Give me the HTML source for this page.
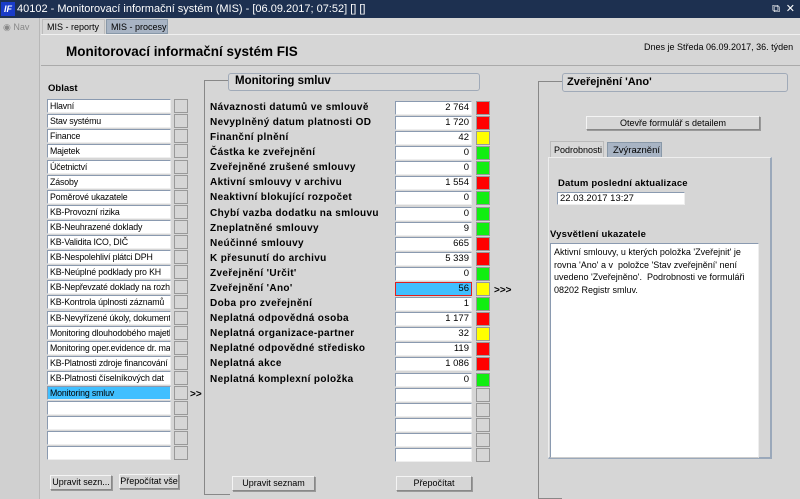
<!DOCTYPE html>
<html><head><meta charset="utf-8"><style>
*{box-sizing:border-box;margin:0;padding:0}
body{width:800px;height:499px;overflow:hidden;background:#d6d6d6;font-family:"Liberation Sans",Arial,sans-serif;font-size:9.5px;color:#000;position:relative}
.a{position:absolute}
.tb{left:0;top:0;width:800px;height:18px;background:#1d3050;color:#fff;font-size:11px;line-height:18px;padding-left:17px}
.inp{position:absolute;background:#fff;border:1px solid #8a9ab0;border-right-color:#eee;border-bottom-color:#eee;height:14px;line-height:12px;padding:0 2px;white-space:nowrap;overflow:hidden;font-size:9.5px}
.l .inp{font-size:8.8px;letter-spacing:-0.15px}
.sq{position:absolute;width:14px;height:14px;border:1px solid #999;background:#d6d6d6}
.btn{position:absolute;border:1px solid #888;border-left-color:#f4f4f4;border-top-color:#f4f4f4;background:#d6d6d6;text-align:center;font-size:9px;line-height:13px;box-shadow:1px 1px 0 #999;white-space:nowrap;overflow:hidden}
.lbl{position:absolute;font-weight:bold;font-size:10px;letter-spacing:0.35px;white-space:nowrap}
.r{background:#f00}.y{background:#ff0}.g{background:#1e1}
</style></head><body>
<div class="a tb"><span class="a" style="left:1px;top:2px;width:14px;height:14px;background:#1a3cc8;color:#fff;font-size:9px;line-height:14px;font-weight:bold;font-style:italic;text-align:center">IF</span>40102 - Monitorovací informační systém (MIS) - [06.09.2017; 07:52] [] []<span class="a" style="right:20px;top:0">⧉</span><span class="a" style="right:5px;top:0">✕</span></div>
<div class="a" style="left:0;top:18px;width:40px;height:481px;background:#d0d0d0;border-right:1px solid #b8b8b8"></div>
<div class="a" style="left:3px;top:22px;color:#888;font-size:9px">◉ Nav</div>
<div class="a" style="left:42px;top:19px;width:63px;height:16px;background:#d6d6d6;border:1px solid #bbb;border-bottom:none;font-size:9px;line-height:14px;padding-left:4px">MIS - reporty</div>
<div class="a" style="left:106px;top:19px;width:62px;height:15px;background:#a8b4c4;border:1px solid #8898a8;font-size:9px;line-height:14px;padding-left:4px">MIS - procesy</div>
<div class="a" style="left:41px;top:34px;width:759px;height:1px;background:#f0f0f0"></div>
<div class="a" style="left:66px;top:44px;font-size:13.5px;font-weight:bold">Monitorovací informační systém FIS</div>
<div class="a" style="left:644px;top:42px;font-size:9px">Dnes je Středa  06.09.2017, 36. týden</div>
<div class="a" style="left:41px;top:65px;width:759px;height:1px;background:#f4f4f4;border-top:1px solid #aaa"></div>
<div class="lbl" style="left:48px;top:83px;font-size:9.5px;letter-spacing:0">Oblast</div>
<div class="l">
<div class="inp" style="left:47px;top:99px;width:124px">Hlavní</div><div class="sq" style="left:174px;top:99px"></div>
<div class="inp" style="left:47px;top:114px;width:124px">Stav systému</div><div class="sq" style="left:174px;top:114px"></div>
<div class="inp" style="left:47px;top:129px;width:124px">Finance</div><div class="sq" style="left:174px;top:129px"></div>
<div class="inp" style="left:47px;top:144px;width:124px">Majetek</div><div class="sq" style="left:174px;top:144px"></div>
<div class="inp" style="left:47px;top:160px;width:124px">Účetnictví</div><div class="sq" style="left:174px;top:160px"></div>
<div class="inp" style="left:47px;top:175px;width:124px">Zásoby</div><div class="sq" style="left:174px;top:175px"></div>
<div class="inp" style="left:47px;top:190px;width:124px">Poměrové ukazatele</div><div class="sq" style="left:174px;top:190px"></div>
<div class="inp" style="left:47px;top:205px;width:124px">KB-Provozní rizika</div><div class="sq" style="left:174px;top:205px"></div>
<div class="inp" style="left:47px;top:220px;width:124px">KB-Neuhrazené doklady</div><div class="sq" style="left:174px;top:220px"></div>
<div class="inp" style="left:47px;top:235px;width:124px">KB-Validita ICO, DIČ</div><div class="sq" style="left:174px;top:235px"></div>
<div class="inp" style="left:47px;top:250px;width:124px">KB-Nespolehliví plátci DPH</div><div class="sq" style="left:174px;top:250px"></div>
<div class="inp" style="left:47px;top:265px;width:124px">KB-Neúplné podklady pro KH</div><div class="sq" style="left:174px;top:265px"></div>
<div class="inp" style="left:47px;top:280px;width:124px">KB-Nepřevzaté doklady na rozh</div><div class="sq" style="left:174px;top:280px"></div>
<div class="inp" style="left:47px;top:295px;width:124px">KB-Kontrola úplnosti záznamů</div><div class="sq" style="left:174px;top:295px"></div>
<div class="inp" style="left:47px;top:311px;width:124px">KB-Nevyřízené úkoly, dokument</div><div class="sq" style="left:174px;top:311px"></div>
<div class="inp" style="left:47px;top:326px;width:124px">Monitoring dlouhodobého majetk</div><div class="sq" style="left:174px;top:326px"></div>
<div class="inp" style="left:47px;top:341px;width:124px">Monitoring oper.evidence dr. ma</div><div class="sq" style="left:174px;top:341px"></div>
<div class="inp" style="left:47px;top:356px;width:124px">KB-Platnosti zdroje financování</div><div class="sq" style="left:174px;top:356px"></div>
<div class="inp" style="left:47px;top:371px;width:124px">KB-Platnosti číselníkových dat</div><div class="sq" style="left:174px;top:371px"></div>
<div class="inp" style="left:47px;top:386px;width:124px;background:#40bfff">Monitoring smluv</div><div class="sq" style="left:174px;top:386px"></div>
<div class="inp" style="left:47px;top:401px;width:124px"></div><div class="sq" style="left:174px;top:401px"></div>
<div class="inp" style="left:47px;top:416px;width:124px"></div><div class="sq" style="left:174px;top:416px"></div>
<div class="inp" style="left:47px;top:431px;width:124px"></div><div class="sq" style="left:174px;top:431px"></div>
<div class="inp" style="left:47px;top:446px;width:124px"></div><div class="sq" style="left:174px;top:446px"></div>
</div>
<div class="lbl" style="left:190px;top:389px;letter-spacing:0">&gt;&gt;</div>
<div class="btn" style="left:50px;top:475px;width:62px;height:15px">Upravit sezn...</div>
<div class="btn" style="left:119px;top:474px;width:60px;height:15px">Přepočítat vše</div>

<div class="a" style="left:204px;top:80px;width:26px;height:415px;border-left:1px solid #888;border-top:1px solid #888;border-bottom:1px solid #888"></div>
<div class="a" style="left:228px;top:73px;width:252px;height:18px;border:1px solid #a0aab8;border-radius:3px;background:#d8d8d8;font-weight:bold;font-size:11.5px;line-height:15px;padding-left:6px">Monitoring smluv</div>

<div class="lbl" style="left:210px;top:102px">Návaznosti datumů ve smlouvě</div><div class="inp" style="left:395px;top:101px;width:77px;text-align:right">2 764</div><div class="sq r" style="left:476px;top:101px"></div>
<div class="lbl" style="left:210px;top:117px">Nevyplněný datum platnosti OD</div><div class="inp" style="left:395px;top:116px;width:77px;text-align:right">1 720</div><div class="sq r" style="left:476px;top:116px"></div>
<div class="lbl" style="left:210px;top:132px">Finanční plnění</div><div class="inp" style="left:395px;top:131px;width:77px;text-align:right">42</div><div class="sq y" style="left:476px;top:131px"></div>
<div class="lbl" style="left:210px;top:147px">Částka ke zveřejnění</div><div class="inp" style="left:395px;top:146px;width:77px;text-align:right">0</div><div class="sq g" style="left:476px;top:146px"></div>
<div class="lbl" style="left:210px;top:162px">Zveřejněné zrušené smlouvy</div><div class="inp" style="left:395px;top:161px;width:77px;text-align:right">0</div><div class="sq g" style="left:476px;top:161px"></div>
<div class="lbl" style="left:210px;top:177px">Aktivní smlouvy v archivu</div><div class="inp" style="left:395px;top:176px;width:77px;text-align:right">1 554</div><div class="sq r" style="left:476px;top:176px"></div>
<div class="lbl" style="left:210px;top:192px">Neaktivní blokující rozpočet</div><div class="inp" style="left:395px;top:191px;width:77px;text-align:right">0</div><div class="sq g" style="left:476px;top:191px"></div>
<div class="lbl" style="left:210px;top:208px">Chybí vazba dodatku na smlouvu</div><div class="inp" style="left:395px;top:207px;width:77px;text-align:right">0</div><div class="sq g" style="left:476px;top:207px"></div>
<div class="lbl" style="left:210px;top:223px">Zneplatněné smlouvy</div><div class="inp" style="left:395px;top:222px;width:77px;text-align:right">9</div><div class="sq g" style="left:476px;top:222px"></div>
<div class="lbl" style="left:210px;top:238px">Neúčinné smlouvy</div><div class="inp" style="left:395px;top:237px;width:77px;text-align:right">665</div><div class="sq r" style="left:476px;top:237px"></div>
<div class="lbl" style="left:210px;top:253px">K přesunutí do archivu</div><div class="inp" style="left:395px;top:252px;width:77px;text-align:right">5 339</div><div class="sq r" style="left:476px;top:252px"></div>
<div class="lbl" style="left:210px;top:268px">Zveřejnění 'Určit'</div><div class="inp" style="left:395px;top:267px;width:77px;text-align:right">0</div><div class="sq g" style="left:476px;top:267px"></div>
<div class="lbl" style="left:210px;top:283px">Zveřejnění 'Ano'</div><div class="inp" style="left:395px;top:282px;width:77px;text-align:right;background:#40bfff;border:1px solid #e02020">56</div><div class="sq y" style="left:476px;top:282px"></div>
<div class="lbl" style="left:210px;top:298px">Doba pro zveřejnění</div><div class="inp" style="left:395px;top:297px;width:77px;text-align:right">1</div><div class="sq g" style="left:476px;top:297px"></div>
<div class="lbl" style="left:210px;top:313px">Neplatná odpovědná osoba</div><div class="inp" style="left:395px;top:312px;width:77px;text-align:right">1 177</div><div class="sq r" style="left:476px;top:312px"></div>
<div class="lbl" style="left:210px;top:328px">Neplatná organizace-partner</div><div class="inp" style="left:395px;top:327px;width:77px;text-align:right">32</div><div class="sq y" style="left:476px;top:327px"></div>
<div class="lbl" style="left:210px;top:343px">Neplatné odpovědné středisko</div><div class="inp" style="left:395px;top:342px;width:77px;text-align:right">119</div><div class="sq r" style="left:476px;top:342px"></div>
<div class="lbl" style="left:210px;top:358px">Neplatná akce</div><div class="inp" style="left:395px;top:357px;width:77px;text-align:right">1 086</div><div class="sq r" style="left:476px;top:357px"></div>
<div class="lbl" style="left:210px;top:374px">Neplatná komplexní položka</div><div class="inp" style="left:395px;top:373px;width:77px;text-align:right">0</div><div class="sq g" style="left:476px;top:373px"></div>
<div class="inp" style="left:395px;top:388px;width:77px"></div><div class="sq" style="left:476px;top:388px"></div>
<div class="inp" style="left:395px;top:403px;width:77px"></div><div class="sq" style="left:476px;top:403px"></div>
<div class="inp" style="left:395px;top:418px;width:77px"></div><div class="sq" style="left:476px;top:418px"></div>
<div class="inp" style="left:395px;top:433px;width:77px"></div><div class="sq" style="left:476px;top:433px"></div>
<div class="inp" style="left:395px;top:448px;width:77px"></div><div class="sq" style="left:476px;top:448px"></div>
<div class="lbl" style="left:494px;top:285px;letter-spacing:0">&gt;&gt;&gt;</div>
<div class="btn" style="left:232px;top:476px;width:83px;height:15px">Upravit seznam</div>
<div class="btn" style="left:396px;top:476px;width:76px;height:15px">Přepočítat</div>

<div class="a" style="left:538px;top:81px;width:24px;height:418px;border-left:1px solid #888;border-top:1px solid #888;border-bottom:1px solid #888"></div>
<div class="a" style="left:562px;top:73px;width:226px;height:19px;border:1px solid #a0aab8;border-radius:3px;background:#d8d8d8;font-weight:bold;font-size:11px;line-height:16px;padding-left:4px">Zveřejnění 'Ano'</div>
<div class="btn" style="left:586px;top:116px;width:174px;height:14px;line-height:12px">Otevře formulář s detailem</div>
<div class="a" style="left:550px;top:141px;width:54px;height:17px;border:1px solid #bbb;border-bottom:none;background:#d8d8d8;font-size:9px;line-height:16px;padding-left:3px;white-space:nowrap">Podrobnosti</div>
<div class="a" style="left:607px;top:142px;width:55px;height:16px;background:#a8b4c4;border:1px solid #8898a8;font-size:9.5px;line-height:15px;padding-left:5px">Zvýraznění</div>
<div class="a" style="left:548px;top:157px;width:224px;height:302px;border:1px solid #eee;border-right:2px solid #9aa8ba;border-bottom:2px solid #9aa8ba"></div>
<div class="lbl" style="left:558px;top:178px;font-size:9.5px;letter-spacing:0.2px">Datum poslední aktualizace</div>
<div class="inp" style="left:557px;top:192px;width:128px;height:13px;line-height:11px">22.03.2017 13:27</div>
<div class="lbl" style="left:550px;top:229px;font-size:9.5px;letter-spacing:0.2px">Vysvětlení ukazatele</div>
<div class="a" style="left:550px;top:243px;width:209px;height:215px;background:#fff;border:1px solid #8a9ab0;border-right-color:#eee;border-bottom-color:#ccc;padding:2px 3px;font-size:9px;line-height:12.5px">Aktivní smlouvy, u kterých položka 'Zveřejnit' je rovna 'Ano' a v&nbsp; položce 'Stav zveřejnění' není uvedeno 'Zveřejněno'.&nbsp; Podrobnosti ve formuláři 08202 Registr smluv.</div>
</body></html>
